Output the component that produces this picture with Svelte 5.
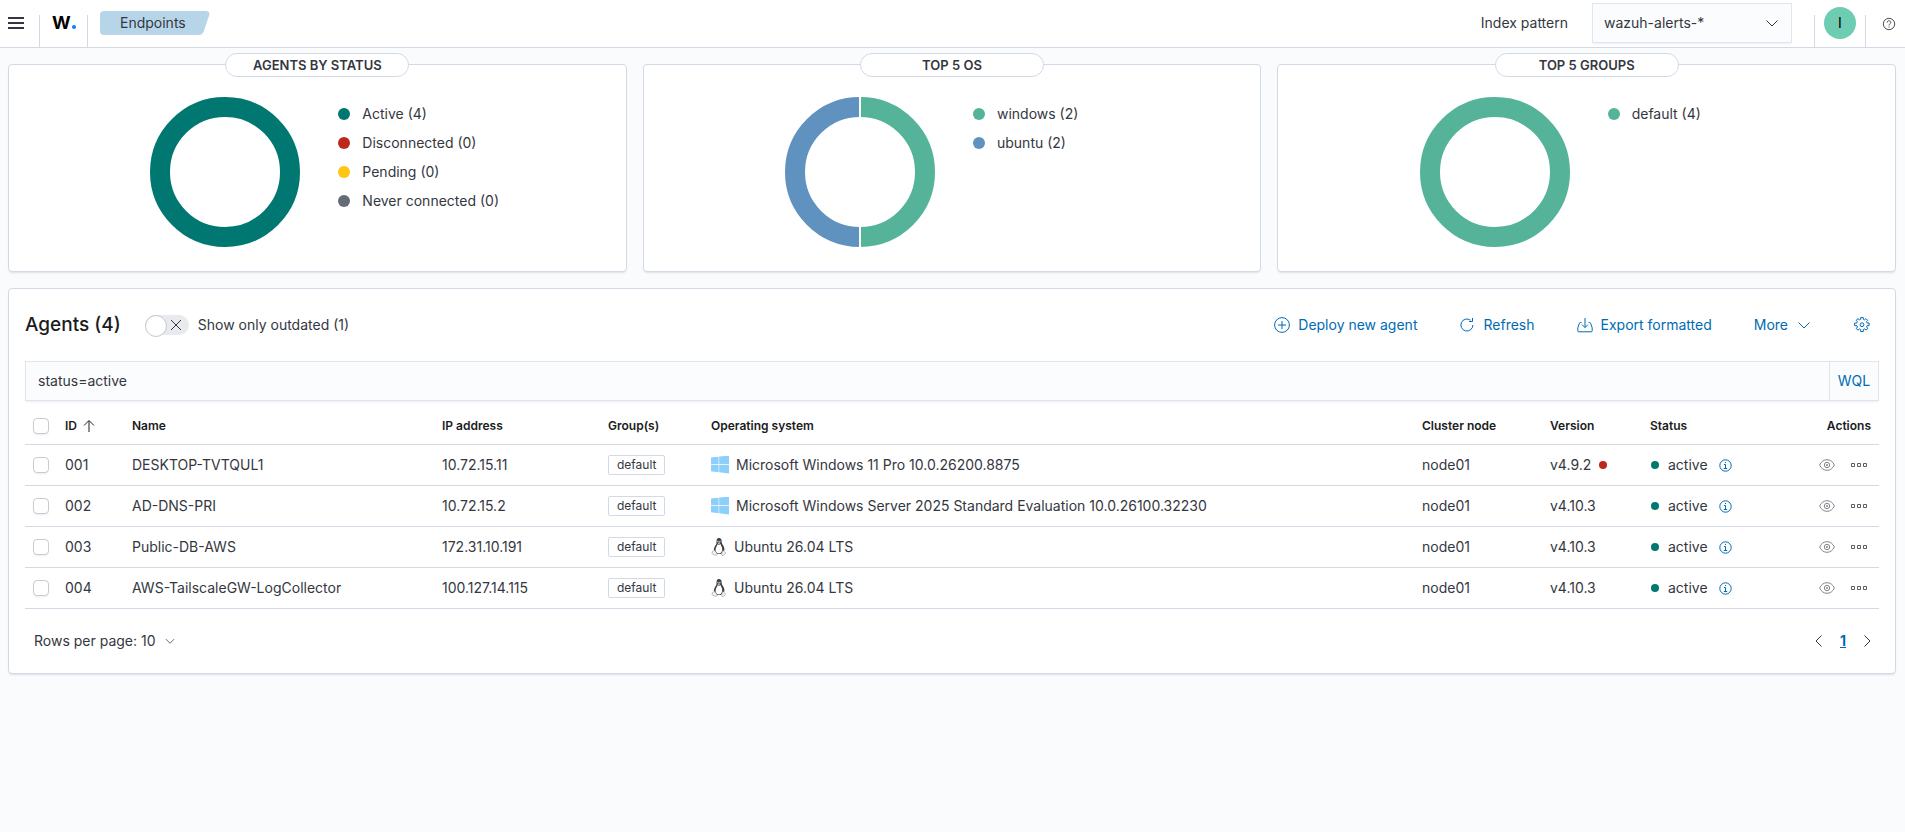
<script lang="ts">
  type Slice = { label: string; count: number; color: string };
  type Agent = {
    id: string; name: string; ip: string; group: string;
    platform: 'windows' | 'linux'; os: string; version: string; outdated?: boolean;
  };

  const charts: { title: string; slices: Slice[] }[] = [
    {
      title: 'Agents by status',
      slices: [
        { label: 'Active', count: 4, color: '#007871' },
        { label: 'Disconnected', count: 0, color: '#bd271e' },
        { label: 'Pending', count: 0, color: '#fec514' },
        { label: 'Never connected', count: 0, color: '#646a77' },
      ],
    },
    {
      title: 'Top 5 OS',
      slices: [
        { label: 'windows', count: 2, color: '#54b399' },
        { label: 'ubuntu', count: 2, color: '#6092c0' },
      ],
    },
    { title: 'Top 5 groups', slices: [{ label: 'default', count: 4, color: '#54b399' }] },
  ];

  const agents: Agent[] = [
    { id: '001', name: 'DESKTOP-TVTQUL1', ip: '10.72.15.11', group: 'default', platform: 'windows', os: 'Microsoft Windows 11 Pro 10.0.26200.8875', version: 'v4.9.2', outdated: true },
    { id: '002', name: 'AD-DNS-PRI', ip: '10.72.15.2', group: 'default', platform: 'windows', os: 'Microsoft Windows Server 2025 Standard Evaluation 10.0.26100.32230', version: 'v4.10.3' },
    { id: '003', name: 'Public-DB-AWS', ip: '172.31.10.191', group: 'default', platform: 'linux', os: 'Ubuntu 26.04 LTS', version: 'v4.10.3' },
    { id: '004', name: 'AWS-TailscaleGW-LogCollector', ip: '100.127.14.115', group: 'default', platform: 'linux', os: 'Ubuntu 26.04 LTS', version: 'v4.10.3' },
  ];

  let onlyOutdated = $state(false);
  let query = $state('status=active');
  let selected = $state<string[]>([]);

  const rows = $derived(onlyOutdated ? agents.filter((a) => a.outdated) : agents);
  const allSelected = $derived(rows.length > 0 && selected.length === rows.length);

  function toggleAll() {
    selected = allSelected ? [] : rows.map((a) => a.id);
  }

  // Ring segments as stroke-dasharray percentages of the circle
  function arcs(slices: Slice[]) {
    const total = slices.reduce((sum, s) => sum + s.count, 0);
    let start = 0;
    return slices.filter((s) => s.count > 0).map((s) => {
      const arc = { color: s.color, size: (s.count / total) * 100, start };
      start += arc.size;
      return arc;
    });
  }
</script>

{#snippet chevron(size: number)}
  <svg class="stroke" width={size} height={size} viewBox="0 0 16 16" aria-hidden="true"><path d="M2.500 5.500 8 11l5.500-5.500" /></svg>
{/snippet}

<header class="topbar">
  <button class="menu" type="button" aria-label="Toggle navigation">
    <svg width="16" height="16" viewBox="0 0 16 16"><path fill="#343741" d="M0 2h16v2H0zM0 7h16v2H0zM0 12h16v2H0z" /></svg>
  </button>
  <a class="brand" href="#home" aria-label="Home">W<span class="brand-dot"></span></a>
  <nav class="crumbs" aria-label="Breadcrumb">
    <svg class="crumb-bg" viewBox="0 0 109 24" preserveAspectRatio="none" aria-hidden="true">
      <path d="M4 0h101q4.500 0 3.500 4l-5.500 16.500Q101.500 24 98 24H4q-4 0-4-4V4q0-4 4-4z" />
    </svg>
    <a href="#endpoints">Endpoints</a>
  </nav>
  <div class="pattern">
    <label for="pattern">Index pattern</label>
    <div class="select">
      <select id="pattern">
        <option>wazuh-alerts-*</option>
      </select>
      {@render chevron(16)}
    </div>
  </div>
  <button class="user" type="button" aria-label="Account"><span class="avatar">I</span></button>
  <button class="help" type="button" aria-label="Help">
    <svg class="stroke" width="14" height="14" viewBox="0 0 16 16"><circle cx="8" cy="8" r="6.500" /><path d="M5.900 6.400C5.900 5 6.800 4.300 8 4.300s2.100.8 2.100 1.900C10.100 7.800 8 7.700 8 9.500M8 10.800v1.200" /></svg>
  </button>
</header>

<main>
  <section class="charts">
    {#each charts as chart (chart.title)}
      <article class="panel chart">
        <h2>{chart.title}</h2>
        <div class="chart-body">
          <svg class="donut" width="150" height="150" viewBox="0 0 150 150" role="img" aria-label={chart.title}>
            <g transform="rotate(-90 75 75)">
              {#each arcs(chart.slices) as arc}
                <circle cx="75" cy="75" r="65" pathLength="100" stroke={arc.color} stroke-dasharray="{arc.size} 100" stroke-dashoffset={-arc.start} />
              {/each}
            </g>
            {#if arcs(chart.slices).length > 1}
              <path class="split" d="M75 0v150" />
            {/if}
          </svg>
          <ul>
            {#each chart.slices as s (s.label)}
              <li><span class="dot" style={`background:${s.color}`}></span>{s.label} ({s.count})</li>
            {/each}
          </ul>
        </div>
      </article>
    {/each}
  </section>

  <section class="panel agents">
    <div class="toolbar">
      <h1>Agents ({agents.length})</h1>
      <label class="switch">
        <span class="switch-box">
          <input type="checkbox" role="switch" bind:checked={onlyOutdated} />
          <svg class="stroke" width="12" height="12" viewBox="0 0 12 12" aria-hidden="true"><path d="M1 1l10 10M11 1 1 11" /></svg>
        </span>
        Show only outdated (1)
      </label>
      <div class="tools">
        <button class="link" type="button">
          <svg class="stroke" width="16" height="16" viewBox="0 0 16 16" aria-hidden="true"><circle cx="8" cy="8" r="7.400" /><path d="M8 4v8M4 8h8" /></svg>
          Deploy new agent
        </button>
        <button class="link" type="button">
          <svg class="stroke" width="16" height="16" viewBox="0 0 16 16" aria-hidden="true"><path d="M11.500 3.200A6 6 0 1 0 13.900 8M13.500 1v3.500H10" /></svg>
          Refresh
        </button>
        <button class="link" type="button">
          <svg class="stroke" width="16" height="16" viewBox="0 0 16 16" aria-hidden="true"><path d="M4.500 5.500H3.400q-.8 0-1 .8L.800 10.800v3q0 1 1 1h12.400q1 0 1-1v-3l-1.600-4.500q-.2-.8-1-.8h-1.100M8 1v9.500M5 7.600l3 3 3-3" /></svg>
          Export formatted
        </button>
        <button class="link" type="button">More {@render chevron(16)}</button>
        <button class="link" type="button" aria-label="Table settings">
          <svg class="stroke" width="16" height="16" viewBox="0 0 16 16"><path d="M6.700.6h2.600v1.700l1.300.5 1.300-1.200 1.800 1.800-1.200 1.300.6 1.300h2v2.600h-1.900l-.6 1.400 1.300 1.300-1.900 1.800-1.300-1.200-1.400.6v2H6.700v-2l-1.300-.5-1.300 1.200-1.900-1.800 1.300-1.400-.6-1.300H.6V6.100h2.100l.6-1.400L2.100 3.400l1.900-1.800 1.300 1.200 1.400-.5z" /><circle cx="8" cy="7.700" r="1.900" /></svg>
        </button>
      </div>
    </div>

    <div class="search">
      <input type="text" aria-label="Search agents" bind:value={query} />
      <button type="button">WQL</button>
    </div>

    <table>
      <colgroup>
        <col class="w-check" /><col class="w-id" /><col class="w-name" /><col class="w-ip" /><col class="w-group" /><col /><col class="w-node" /><col class="w-version" /><col class="w-status" /><col class="w-actions" />
      </colgroup>
      <thead>
        <tr>
          <th><input type="checkbox" aria-label="Select all rows" checked={allSelected} onchange={toggleAll} /></th>
          <th>
            <button class="sort" type="button">ID
              <svg class="stroke" width="12" height="12" viewBox="0 0 12 12" aria-hidden="true"><path d="M6 12V1M1 5.500l5-5 5 5" /></svg>
            </button>
          </th>
          <th>Name</th>
          <th>IP address</th>
          <th>Group(s)</th>
          <th>Operating system</th>
          <th>Cluster node</th>
          <th>Version</th>
          <th>Status</th>
          <th class="right">Actions</th>
        </tr>
      </thead>
      <tbody>
        {#each rows as a (a.id)}
          <tr>
            <td><input type="checkbox" aria-label={`Select agent ${a.id}`} value={a.id} bind:group={selected} /></td>
            <td>{a.id}</td>
            <td>{a.name}</td>
            <td>{a.ip}</td>
            <td><span class="badge">{a.group}</span></td>
            <td>
              <div class="os">
                {#if a.platform === 'windows'}
                  <svg width="18" height="18" viewBox="0 0 18 18" aria-hidden="true"><path fill="#8bcffa" d="M0 1.600l7.600-.9v7.600H0zM8.200.6 18-.4v8.700H8.200zM0 8.900h7.600v7.300L0 15.200zM8.200 8.900H18v8.700l-9.800-1.300z" /></svg>
                {:else}
                  <svg width="16" height="18" viewBox="0 0 16 20" aria-hidden="true">
                    <path fill="#3b3b40" d="M8 0c2 0 2.900 1.500 2.900 3.300 0 2 .5 3 1.500 4.600 1 1.700 1.700 3.500 1.600 5.300l-.9 2.300-3.400 2.200H6.200L3.500 15.500 2.300 13c.2-2 1-3.600 2-5.100.8-1.200 1-2.400 1-4.400C5.200 1.500 6 0 8 0z" />
                    <path fill="#fff" d="M6.400 7c.9.700 2.400.6 3.200-.2.500 1.500 1.800 3.200 2 5.100.2 2.300-.8 5-3.500 5.200-2.900.1-4.100-2.300-3.900-4.600C4.400 10.400 5.800 9 6.400 7z" />
                    <path fill="#c9c9cc" d="M6.200 5.500Q8 4 9.700 5.300 8.300 7 7.400 6.600z" />
                    <path fill="#fff" d="M6.300 3h1v1.500h-1zM8.500 3h1v1.500h-1z" />
                    <path fill="#f4f4f5" stroke="#99999e" stroke-width=".7" d="M3 13.800l2.700 3.400q.8 1.800-1 2.100L.8 18q-.7-.3-.3-1.200v-1.600zM11.600 14.700l1-.6 1.200.7 1.700 2.200-2.800 2.300q-1.600.6-1.700-1z" />
                  </svg>
                {/if}
                {a.os}
              </div>
            </td>
            <td>node01</td>
            <td>
              <div class="health">{a.version}{#if a.outdated}<span class="pip outdated"></span>{/if}</div>
            </td>
            <td>
              <div class="health status">
                <span class="pip"></span>active
                <svg class="info" width="13" height="13" viewBox="0 0 13 13" aria-hidden="true"><circle cx="6.500" cy="6.500" r="5.700" /><path d="M5 5.500h1.500v3.500M4.800 9.500h3.400M6 3.500h1" /></svg>
              </div>
            </td>
            <td>
              <div class="actions">
                <button type="button" aria-label="View agent">
                  <svg class="stroke" width="16" height="16" viewBox="0 0 16 16"><path d="M.6 8Q3.200 2.700 8 2.700T15.400 8Q12.800 13.300 8 13.300T.6 8z" /><circle cx="8" cy="8" r="2.700" /><circle cx="8" cy="8" r=".7" /></svg>
                </button>
                <button class="more" type="button" aria-label="More actions">
                  <svg class="stroke" width="16" height="16" viewBox="0 0 16 16"><path d="M.5 6.500h3v3h-3zM6.500 6.500h3v3h-3zM12.500 6.500h3v3h-3z" /></svg>
                </button>
              </div>
            </td>
          </tr>
        {/each}
      </tbody>
    </table>

    <div class="footer">
      <button type="button">Rows per page: 10 {@render chevron(12)}</button>
      <nav class="pages" aria-label="Pagination">
        <button type="button" aria-label="Previous page"><svg class="stroke" width="16" height="16" viewBox="0 0 16 16"><path d="M10.500 2.500 5 8l5.500 5.500" /></svg></button>
        <a href="#page-1">1</a>
        <button type="button" aria-label="Next page"><svg class="stroke" width="16" height="16" viewBox="0 0 16 16"><path d="M5.500 2.500 11 8l-5.500 5.500" /></svg></button>
      </nav>
    </div>
  </section>
</main>

<style>
  :global(body) { background: #fafbfd; color: #343741; font: 400 14px/20px Inter, "Liberation Sans", sans-serif; }
  :global(*) { box-sizing: border-box; }
  button, input, select { font: inherit; color: inherit; margin: 0; }
  button { display: inline-flex; align-items: center; padding: 0; border: 0; background: none; cursor: pointer; }
  svg { flex: none; display: block; }
  .stroke { fill: none; stroke: currentColor; stroke-width: 1; }

  .topbar { display: flex; align-items: flex-end; height: 48px; background: #fff; border-bottom: 1px solid #d3dae6; }
  .menu { width: 39px; height: 47px; padding: 15px 0 0 8px; align-items: flex-start; }
  .brand { display: flex; align-items: flex-start; width: 49px; height: 32px; padding-left: 12px; border: solid #d3dae6; border-width: 0 1px; color: #000; font-size: 18px; line-height: 16px; font-weight: 700; text-decoration: none; }
  .brand-dot { width: 4px; height: 4px; margin: 10px 0 0 1px; border-radius: 50%; background: #0a7cff; }
  .crumbs { position: relative; align-self: flex-start; height: 24px; margin: 11px 0 0 12px; padding: 2px 24px 2px 20px; }
  .crumb-bg { position: absolute; inset: 0; width: 100%; height: 100%; fill: #b7d5e9; }
  .crumbs a { position: relative; color: #343741; text-decoration: none; }
  .pattern { display: flex; align-items: center; align-self: flex-start; gap: 24px; margin: 3px 0 0 auto; }
  .select { position: relative; }
  .select select { appearance: none; display: block; width: 200px; height: 40px; padding: 0 40px 0 11px; border: 1px solid #e0e5ee; border-radius: 0; background: #fbfcfd; box-shadow: 0 2px 2px -1px #98a2b333; }
  .select svg { position: absolute; right: 12px; top: 12px; pointer-events: none; }
  .user { justify-content: center; width: 52px; height: 32px; margin-left: 22px; border: solid #d3dae6; border-width: 0 1px; }
  .avatar { flex: none; width: 32px; height: 32px; margin-top: -16px; border-radius: 50%; background: #6dccb1; color: #000; line-height: 32px; text-align: center; }
  .help { justify-content: center; width: 39px; height: 47px; padding-left: 6px; }

  main { display: flex; flex-direction: column; gap: 16px; padding: 16px 9px 16px 8px; }
  .panel { border: 1px solid #d3dae6; border-radius: 4px; background: #fff; box-shadow: 0 2px 2px -1px #98a2b34d; }
  .charts { display: grid; grid-template-columns: repeat(3, 1fr); gap: 16px; }
  .chart { height: 208px; }
  .chart h2 { width: 184px; height: 24px; margin: -12px auto 0; border: 1px solid #d3dae6; border-radius: 12px; background: #fff; font-size: 13px; line-height: 22px; font-weight: 600; text-align: center; text-transform: uppercase; }
  .chart-body { display: flex; justify-content: center; gap: 38px; padding: 20px 0 0 42px; }
  .donut circle { fill: none; stroke-width: 20; }
  .donut .split { stroke: #fff; stroke-width: 2; }
  .chart ul { width: 188px; margin: 0; padding: 7px 0 0; list-style: none; }
  .chart li { display: flex; align-items: center; gap: 12px; height: 20px; margin-bottom: 9px; }
  .dot { width: 12px; height: 12px; border-radius: 50%; }

  .agents { padding: 16px; }
  .toolbar { display: flex; align-items: center; height: 40px; margin-bottom: 16px; }
  h1 { margin: 0; color: #1a1c21; font-size: 19px; line-height: 24px; font-weight: 500; }
  .switch { display: flex; align-items: center; gap: 9px; margin-left: 24px; }
  .switch-box { position: relative; }
  .switch input { appearance: none; display: block; width: 44px; height: 20px; border-radius: 10px; background: #e9eaee; }
  .switch input::before { content: ""; display: block; width: 20px; height: 20px; border: 1px solid #c5c8ce; border-radius: 50%; background: #fff; }
  .switch input:checked { padding-left: 24px; background: #006bb4; }
  .switch svg { position: absolute; right: 7px; top: 4px; pointer-events: none; }
  .tools { display: flex; align-items: center; gap: 42px; margin-left: auto; padding-right: 9px; }
  .link { gap: 8px; color: #006bb4; }

  .search { display: flex; height: 40px; border: 1px solid #dfe4ee; background: #fbfcfd; box-shadow: 0 2px 2px -1px #98a2b333; }
  .search input { flex: 1; min-width: 0; padding: 0 12px; border: 0; background: none; }
  .search button { justify-content: center; width: 49px; border-left: 1px solid #dfe4ee; color: #006bb4; }

  table { width: 100%; margin-top: 8px; border-collapse: collapse; table-layout: fixed; }
  .w-check { width: 32px; }
  .w-id { width: 67px; }
  .w-name { width: 310px; }
  .w-ip { width: 166px; }
  .w-group { width: 103px; }
  .w-node { width: 128px; }
  .w-version { width: 100px; }
  .w-status { width: 138px; }
  .w-actions { width: 99px; }
  th, td { height: 41px; padding: 0 8px; border-bottom: 1px solid #d3dae6; text-align: left; white-space: nowrap; }
  th { height: 35px; color: #1a1c21; font-size: 12px; line-height: 16px; font-weight: 600; }
  th.right { text-align: right; }
  th input, td input { appearance: none; display: block; width: 16px; height: 16px; border: 1px solid #c9cbcd; border-radius: 4px; background: #fff; box-shadow: 0 2px 2px -1px #98a2b333; }
  th input:checked, td input:checked { border-color: #006bb4; background: #006bb4; }
  .sort { gap: 6px; }
  .badge { display: inline-block; height: 20px; padding: 0 8px; border: 1px solid #d3dae6; border-radius: 2px; font-size: 12px; line-height: 18px; vertical-align: middle; }
  .os { display: flex; align-items: center; gap: 7px; }
  .health { display: flex; align-items: center; gap: 8px; }
  .status { gap: 9px; padding-left: 1px; }
  .pip { width: 8px; height: 8px; border-radius: 50%; background: #007871; }
  .outdated { background: #bd271e; }
  .info { margin: 2px 0 0 2px; fill: none; stroke: #006bb4; }
  .actions { display: flex; justify-content: flex-end; gap: 16px; padding-right: 4px; color: #84868c; }
  .actions .more { color: #5a5d66; }

  .footer { display: flex; justify-content: space-between; align-items: center; height: 32px; margin-top: 16px; padding: 0 4px 0 9px; }
  .footer button { gap: 8px; }
  .pages { display: flex; align-items: center; gap: 13px; }
  .pages a { color: #006bb4; font-weight: 700; text-decoration: underline; }
</style>
